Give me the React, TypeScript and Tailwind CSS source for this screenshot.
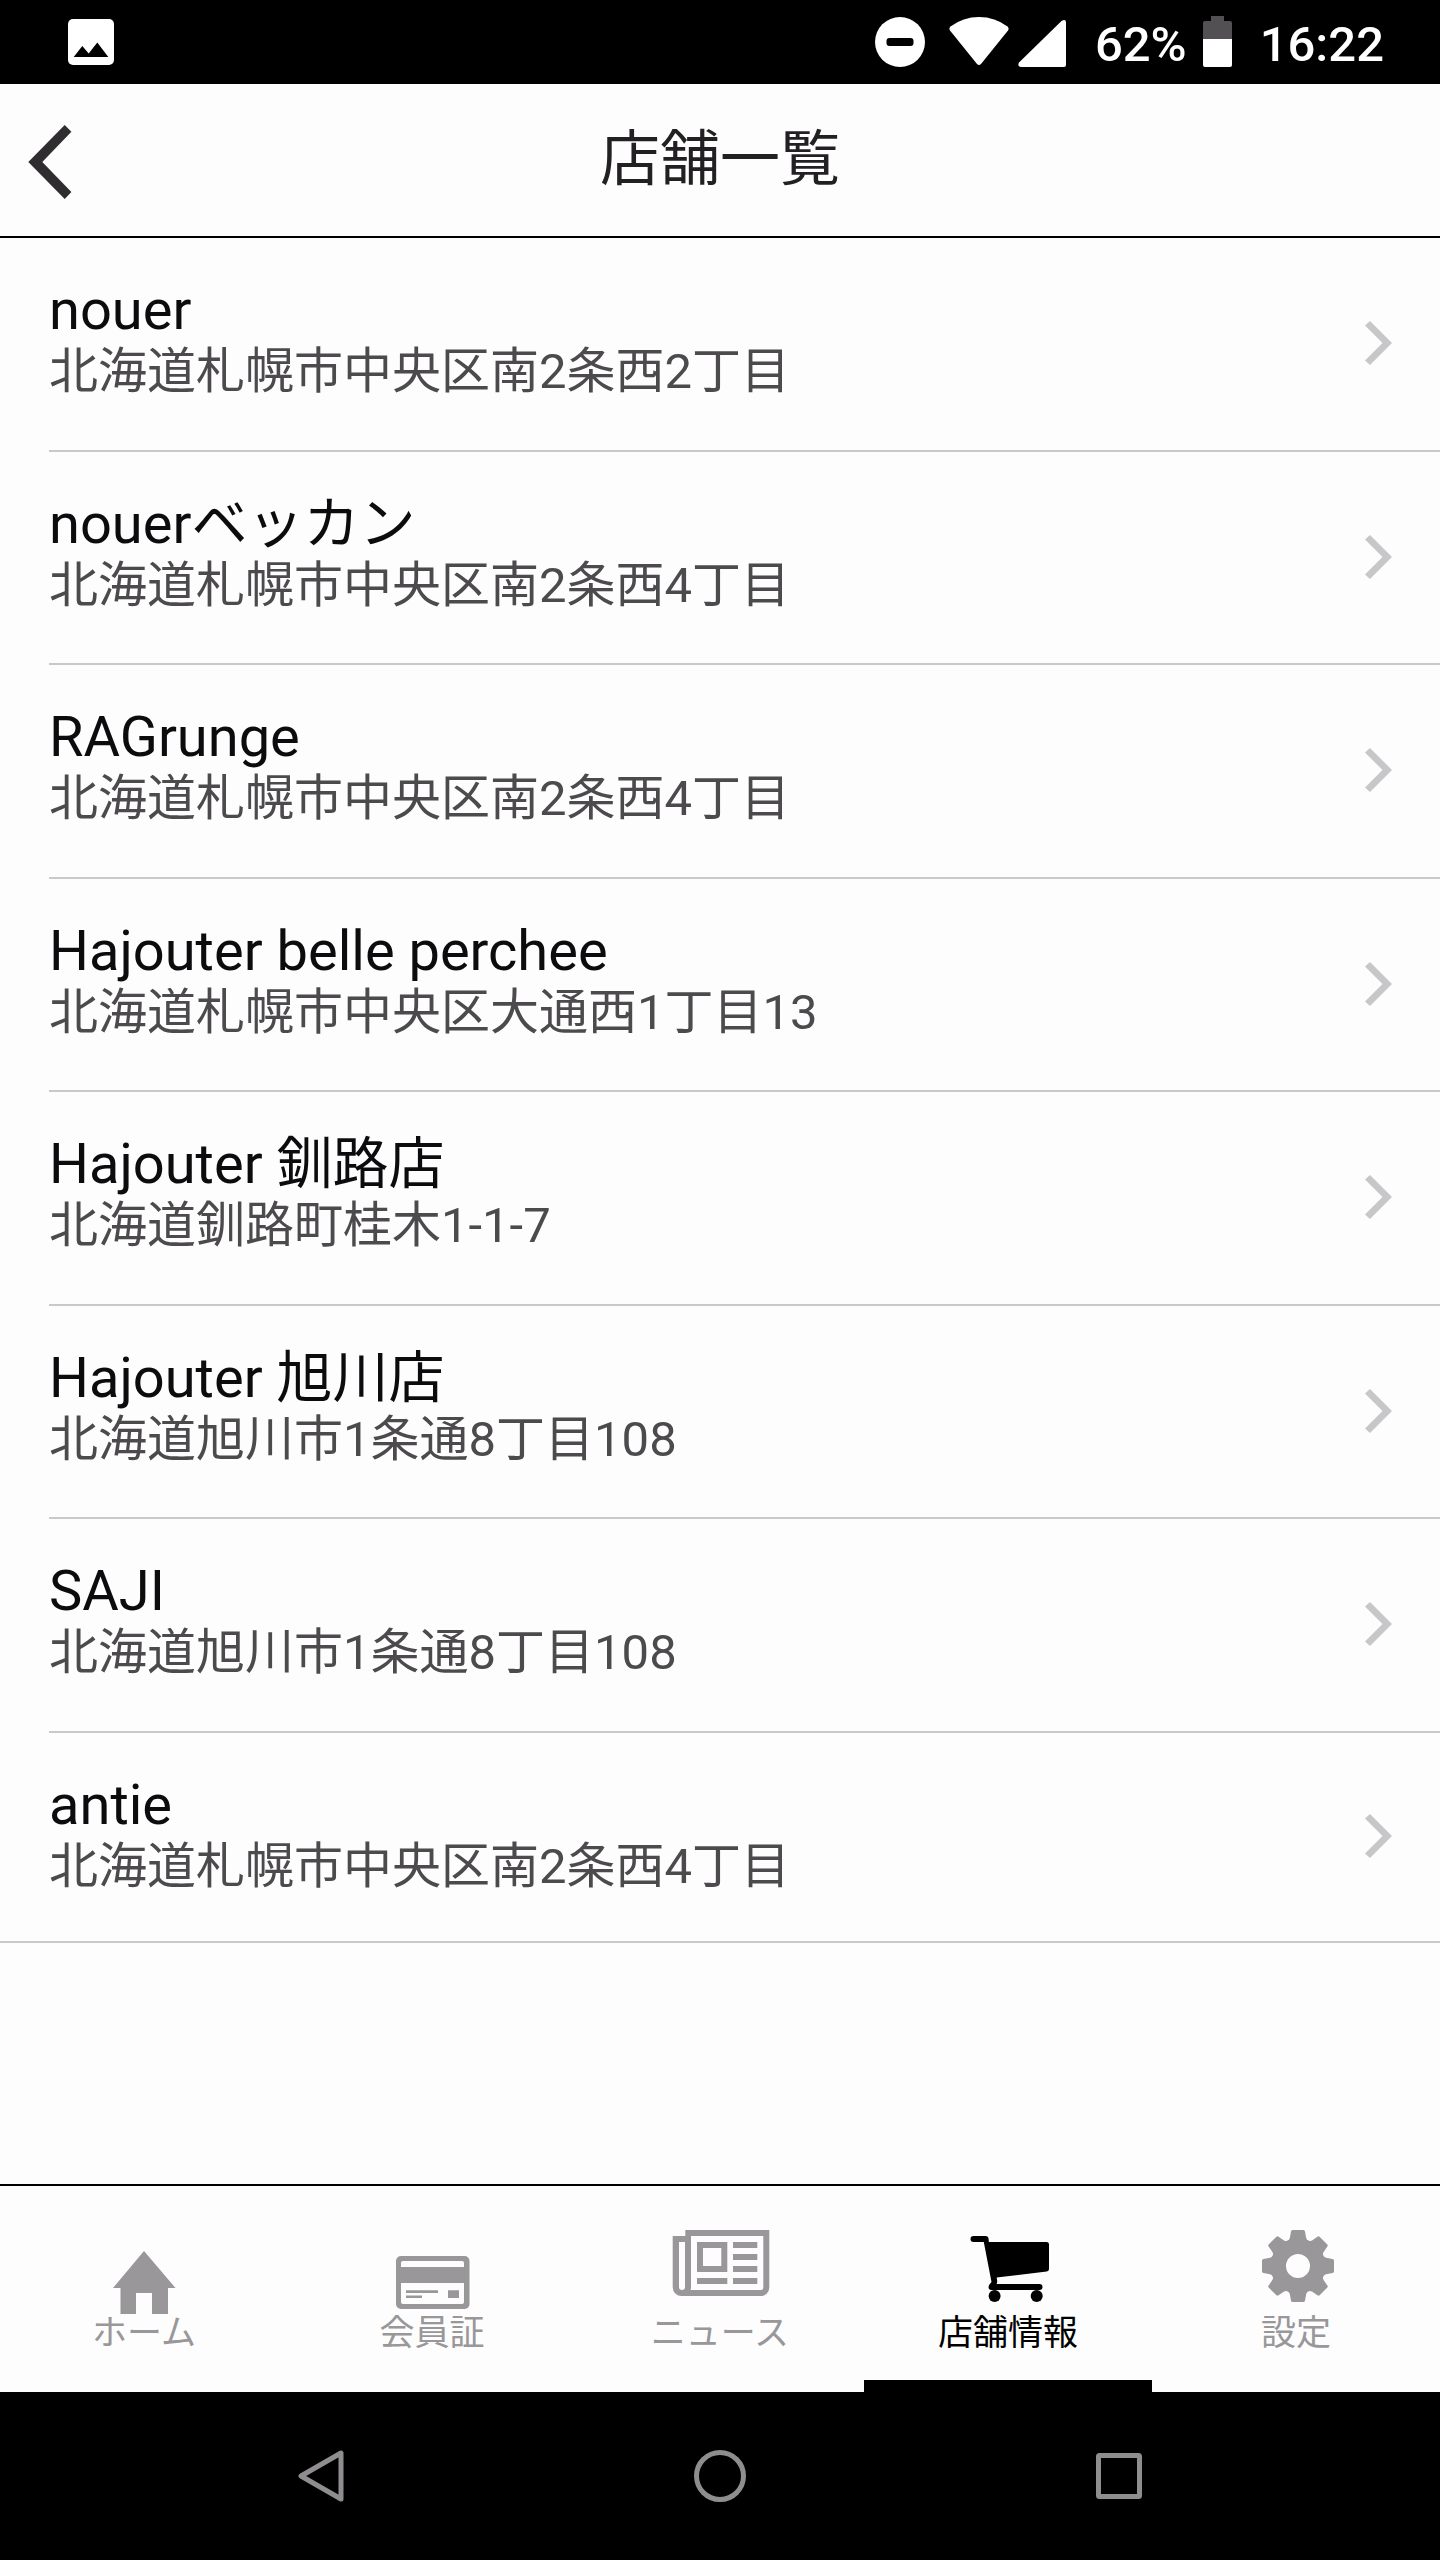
import React, { useState } from "react";
import clsx from "clsx";

interface Shop {
  name: string;
  address: string;
}

interface TabItem {
  id: string;
  label: string;
  icon: React.ReactNode;
}

const shops: Shop[] = [
  { name: "nouer", address: "北海道札幌市中央区南2条西2丁目" },
  { name: "nouerベッカン", address: "北海道札幌市中央区南2条西4丁目" },
  { name: "RAGrunge", address: "北海道札幌市中央区南2条西4丁目" },
  { name: "Hajouter belle perchee", address: "北海道札幌市中央区大通西1丁目13" },
  { name: "Hajouter 釧路店", address: "北海道釧路町桂木1-1-7" },
  { name: "Hajouter 旭川店", address: "北海道旭川市1条通8丁目108" },
  { name: "SAJI", address: "北海道旭川市1条通8丁目108" },
  { name: "antie", address: "北海道札幌市中央区南2条西4丁目" },
];

const TabIcon = ({ children }: { children: React.ReactNode }) => (
  <svg width="120" height="90" viewBox="0 0 120 90" fill="currentColor" aria-hidden="true">
    {children}
  </svg>
);

const HomeIcon = () => (
  <TabIcon>
    <path d="M60 25L91.5 62H84V88H68V67H52V88H36.5V62H29Z" />
  </TabIcon>
);

const CardIcon = () => (
  <TabIcon>
    <path
      fillRule="evenodd"
      d="M29 30H92.500a5 5 0 0 1 5 5V78a5 5 0 0 1-5 5H29a5 5 0 0 1-5-5V35a5 5 0 0 1 5-5ZM31 35a2 2 0 0 0-2 2V41H92V37a2 2 0 0 0-2-2ZM29 57V76a2 2 0 0 0 2 2H90a2 2 0 0 0 2-2V57Z"
    />
    <path d="M34 64.300H66V67H34ZM34 69.500H50V72H34ZM76 64.300H87V72H76Z" />
  </TabIcon>
);

const NewsIcon = () => (
  <TabIcon>
    <path
      fillRule="evenodd"
      d="M25.300 4H109.300V61.500a8.500 8.500 0 0 1-8.500 8.500H21.500a8.800 8.800 0 0 1-8.800-8.800V10H25.300ZM19 16V61a3 3 0 0 0 6 0V16ZM31 10V61.500Q31 63 30.400 64H100.800a2.500 2.500 0 0 0 2.500-2.500V10Z"
    />
    <path fillRule="evenodd" d="M37 16H67.300V46H37ZM43 22V40H61.300V22Z" />
    <path d="M73 16H97.300V22H73ZM73 28H97.300V34H73ZM73 40H97.300V46H73ZM37 52H67.300V58H37ZM73 52H97.300V58H73Z" />
  </TabIcon>
);

const CartIcon = () => (
  <TabIcon>
    <path d="M25.500 10H37.500Q40.300 10 40.600 13L40.900 16H98.500Q101 16 101 18.500V43Q101 45.200 98.800 45.500L48.700 51.500L49.200 55Q49.300 56.800 48.500 58H91.500a3 3 0 0 1 0 6H43.500a3 3 0 0 1-3-3Q40.500 59 43.500 56L35.800 16H25.500a3 3 0 0 1 0-6Z" />
    <circle cx="46.600" cy="70" r="6" />
    <circle cx="88.700" cy="70" r="6" />
  </TabIcon>
);

const GearIcon = () => (
  <TabIcon>
    <circle cx="62" cy="40" r="19.700" fill="none" stroke="currentColor" strokeWidth="15.400" />
    {[0, 45, 90, 135, 180, 225, 270, 315].map((angle) => (
      <path
        key={angle}
        d="M55 5.500Q55.200 4 56.500 4H67.500Q68.800 4 69 5.500L70.200 12Q70.700 14 73 15.500L70 20H54L51 15.500Q53.300 14 53.800 12Z"
        transform={`rotate(${angle} 62 40)`}
      />
    ))}
  </TabIcon>
);

const tabs: TabItem[] = [
  { id: "home", label: "ホーム", icon: <HomeIcon /> },
  { id: "card", label: "会員証", icon: <CardIcon /> },
  { id: "news", label: "ニュース", icon: <NewsIcon /> },
  { id: "shops", label: "店舗情報", icon: <CartIcon /> },
  { id: "settings", label: "設定", icon: <GearIcon /> },
];

const StatusBar = () => (
  <div className="flex h-[84px] items-center justify-between bg-black pr-14 pl-[68px] text-[49px] leading-none font-medium text-white">
    <svg width="46" height="46" viewBox="0 0 46 46" aria-hidden="true">
      <rect width="46" height="46" rx="5" fill="#fff" />
      <path d="M5.700 38L14.300 27L20.700 34.500L29.300 23.500L40.300 38Z" fill="#000" />
    </svg>
    <div className="flex items-center">
      <svg width="50" height="50" viewBox="0 0 50 50" aria-hidden="true">
        <circle cx="25" cy="25" r="25" fill="#fff" />
        <rect x="11.500" y="21" width="27" height="8" rx="3" fill="#000" />
      </svg>
      <svg className="ml-6" width="60" height="50" viewBox="0 0 60 50" fill="#fff" aria-hidden="true">
        <path d="M1 13.500Q-.5 11.500 1.500 9.500Q14 0 30 0T58.500 9.500Q60.500 11.500 59 13.500L32 47Q30 49 28 47Z" />
      </svg>
      <svg className="ml-2" width="50" height="50" viewBox="0 0 50 50" fill="#fff" aria-hidden="true">
        <path d="M2 45.500L44.500 4Q48.500 1.500 49 5V48Q49 50 47 50H4Q0 49.500 2 45.500Z" />
      </svg>
      <span className="ml-7 pt-1">62%</span>
      <svg className="ml-4" width="29" height="52" viewBox="0 0 29 52" aria-hidden="true">
        <path d="M8 0H21V5H27Q29 5 29 7V23H0V7Q0 5 2 5H8Z" fill="#525052" />
        <path d="M0 23H29V49Q29 51 27 51H2Q0 51 0 49Z" fill="#fff" />
      </svg>
      <span className="ml-7 pt-1">16:22</span>
    </div>
  </div>
);

const Header = ({ title }: { title: string }) => (
  <header className="grid h-[154px] grid-cols-[1fr_auto_1fr] items-center border-b-2 border-black px-7">
    <button type="button" aria-label="戻る" className="justify-self-start pt-1">
      <svg width="44" height="74" viewBox="0 0 44 74" fill="#2f2d30" aria-hidden="true">
        <path d="M36.700 0L43.400 6.700L14.300 37L43.400 67L36.700 74L.3 37Z" />
      </svg>
    </button>
    <h1 className="text-[60px] leading-[88px] text-[#232024]">{title}</h1>
  </header>
);

const ShopRow = ({ shop }: { shop: Shop }) => (
  <li className="group flex min-h-[213px] pl-[49px] last:min-h-[208px] odd:min-h-[214px]">
    <a
      href="#"
      className="flex flex-1 items-center justify-between border-b-2 border-[#c9c8cb] pr-12 group-last:border-b-0"
    >
      <div className="self-start pt-10">
        <p className="text-[56px] leading-[64px] text-[#0c0b0d]">{shop.name}</p>
        <p className="text-[49px] leading-[60px] text-[#4c4a4d]">{shop.address}</p>
      </div>
      <svg width="27" height="46" viewBox="0 0 27 46" fill="#c7c6c9" aria-hidden="true">
        <path d="M5 0L27 22L5 44L0 39.500L17.500 22L0 4.500Z" />
      </svg>
    </a>
  </li>
);

const App = () => {
  const [activeTab, setActiveTab] = useState("shops");

  return (
    <div
      lang="ja"
      className="flex min-h-screen flex-col bg-[#fdfdfd] font-[Roboto,'Noto_Sans_CJK_JP',sans-serif]"
    >
      <StatusBar />
      <Header title="店舗一覧" />
      <main className="flex-1">
        <ul className="border-b-2 border-[#c9c8cb]">
          {shops.map((shop) => (
            <ShopRow key={shop.name} shop={shop} />
          ))}
        </ul>
      </main>
      <nav className="grid grid-cols-5 border-t-2 border-black">
        {tabs.map((tab) => (
          <button
            key={tab.id}
            type="button"
            onClick={() => setActiveTab(tab.id)}
            className={clsx(
              "flex h-[206px] flex-col items-center border-b-12 pt-10 text-[35px] leading-9",
              activeTab === tab.id
                ? "border-black text-black"
                : "border-transparent text-[#999799]"
            )}
          >
            {tab.icon}
            <span>{tab.label}</span>
          </button>
        ))}
      </nav>
      <div className="grid h-[168px] grid-cols-3 items-center justify-items-center bg-black px-[122px] text-[#8f8d8f]">
        <button type="button" aria-label="戻る">
          <svg width="46" height="52" viewBox="0 0 46 52" fill="none" stroke="currentColor" strokeWidth="5" strokeLinejoin="round" aria-hidden="true">
            <path d="M43 3V49L3 26Z" />
          </svg>
        </button>
        <button type="button" aria-label="ホーム画面">
          <svg width="52" height="52" viewBox="0 0 52 52" fill="none" stroke="currentColor" strokeWidth="5" aria-hidden="true">
            <circle cx="26" cy="26" r="23.500" />
          </svg>
        </button>
        <button type="button" aria-label="最近使用したアプリ">
          <svg width="46" height="46" viewBox="0 0 46 46" fill="none" stroke="currentColor" strokeWidth="5" strokeLinejoin="round" aria-hidden="true">
            <rect x="2.500" y="2.500" width="41" height="41" rx="1" />
          </svg>
        </button>
      </div>
    </div>
  );
};

export default App;
